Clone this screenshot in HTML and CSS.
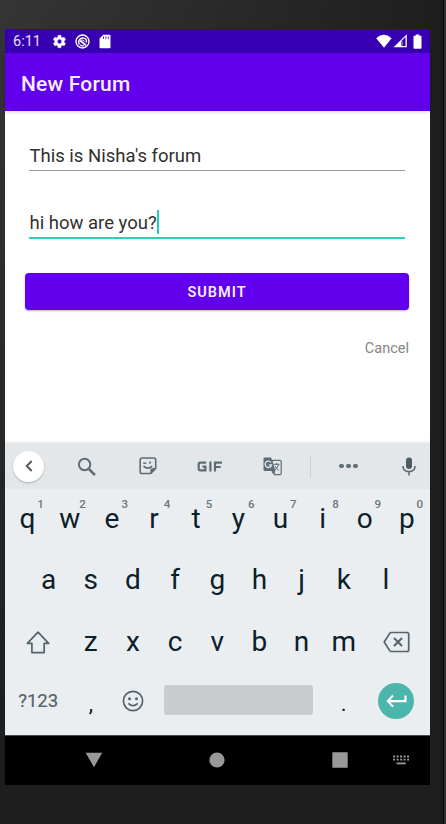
FILE: index.html
```html
<!DOCTYPE html>
<html lang="en">
<head>
<meta charset="utf-8">
<title>New Forum</title>
<link rel="stylesheet" href="styles.css">
</head>
<body>
<div class="frame">
<main class="screen">
  <div class="status">
    <span class="time">6:11</span>
    <svg class="gear" width="15" height="15" viewBox="0 0 24 24" fill="#fff"><path d="M19.400 13c.1-.3.1-.6.1-1s0-.7-.1-1l2.100-1.600c.2-.2.3-.5.100-.7l-2-3.400c-.1-.2-.4-.3-.6-.2l-2.500 1c-.5-.4-1.100-.7-1.700-1l-.4-2.600c0-.3-.2-.5-.5-.5h-4c-.3 0-.5.2-.5.5L9 5.100c-.6.300-1.200.600-1.700 1l-2.500-1c-.2-.1-.5 0-.6.2l-2 3.400c-.1.2-.1.500.1.700L4.500 11c0 .3-.1.600-.1 1s0 .7.100 1l-2.200 1.600c-.2.2-.2.500-.1.700l2 3.400c.1.2.4.300.6.200l2.500-1c.5.400 1.100.700 1.700 1l.4 2.600c0 .3.200.5.500.5h4c.3 0 .5-.2.500-.5l.4-2.600c.6-.3 1.200-.6 1.700-1l2.500 1c.2.100.5 0 .6-.2l2-3.400c.1-.2.1-.5-.1-.7zM12 15.500a3.500 3.500 0 1 1 0-7 3.500 3.500 0 0 1 0 7z" stroke="#fff" stroke-width=".5"/></svg>
    <svg class="sync" width="15" height="15" viewBox="0 0 15 15" fill="none" stroke="#fff"><circle cx="7.500" cy="7.500" r="6.500" stroke-width="1.400"/><path d="M4.300 10.500A4.200 4.200 0 1 1 11.400 6v2.500" stroke-width="1.400"/><path d="M5.200 6.800 11 11.300" stroke-width="1.800"/><path d="M5.500 6.500c1.500-1 3.500-.5 4 1.200" stroke-width="1"/><path d="M5 10.800c1.200 1 3 1.200 4 .6" stroke-width="1.200"/></svg>
    <svg class="sd" width="12" height="15" viewBox="0 0 12 15"><path d="M4.300.8h6.200q1 0 1 1v11.400q0 1-1 1h-9q-1 0-1-1V4.600z" fill="#fff"/><path d="M4.500 2.500v2.300M6.900 2.500v2.300M9.300 2.500v2.300" stroke="#3700b3" stroke-width=".9"/></svg>
    <span class="grow"></span>
    <svg width="16" height="14" viewBox="0 0 16 14"><path d="M.2 4.200Q7.800-2.600 15.600 4.200L8 13.700z" fill="#fff"/></svg>
    <svg class="cell" width="15" height="14" viewBox="0 0 15 14"><path d="M.5 13.300 13.800.3v13z" fill="#fff"/><path d="M8.300 7.300v4.800h4.200v-9z" fill="#3700b3"/><path d="M9.100 7.200v4.700" stroke="#fff" stroke-width=".6"/></svg>
    <svg class="battery" width="9" height="15" viewBox="0 0 9 15"><path d="M2.700.4h3.600v1.400h1.400q.8 0 .8.800V14q0 .700-.8.700H1.300q-.8 0-.8-.7V2.600q0-.8.8-.8h1.400z" fill="#fff"/></svg>
  </div>
  <header class="appbar"><h1>New Forum</h1></header>
  <section class="form">
    <div class="field">This is Nisha's forum</div>
    <div class="field active">hi how are you?<span class="caret"></span></div>
    <div class="submit">SUBMIT</div>
    <div class="cancel">Cancel</div>
  </section>
  <section class="keyboard">
    <div class="tools">
      <span class="back"><svg width="10" height="14" viewBox="0 0 10 14" fill="none" stroke="#555b5f" stroke-width="2"><path d="M7.700 2 2.800 7l4.900 5"/></svg></span>
      <svg class="t-search" width="20" height="20" viewBox="0 0 20 20" fill="none" stroke="#5f6d74"><circle cx="7.600" cy="7.500" r="5.700" stroke-width="2"/><path d="m11.900 12 6 6" stroke-width="2.500"/></svg>
      <svg class="t-sticker" width="18" height="18" viewBox="0 0 18 18" fill="none" stroke="#5f6d74" stroke-width="1.600"><path d="M3 1h12q1.700 0 1.700 1.700V11.500l-5 5H3q-1.800 0-1.800-1.800v-12Q1.200 1 3 1z"/><path d="M16.500 11.500h-3.200q-1.500 0-1.500 1.500v3.500z" fill="#5f6d74" stroke-width=".8"/><path d="M4.500 9.200q4.400 4 8.700 0"/><path d="M4.300 6.200h3M11 4.500v2.300"/></svg>
      <span class="t-gif"><svg width="26" height="11" viewBox="0 0 26 11" fill="none" stroke="#5f6d74" stroke-width="2.200"><path d="M9.200 1.600H3q-1.300 0-1.300 1.300v5.200q0 1.300 1.300 1.300h5.400V5.600H5.500M13.400.5v10M18 10.500V1.600h7M18 6h5.700"/></svg></span>
      <svg class="t-translate" width="19" height="19" viewBox="0 0 19 19"><path d="M9 3.300h8q1.200 0 1.200 1.200v12q0 1.200-1.200 1.200h-5.500z" fill="none" stroke="#5f6d74" stroke-width="1.200"/><path d="M1.700.6h6.500l4.300 13.300H1.700Q.5 13.900.5 12.700V1.800Q.5.600 1.700.6zM8.500 14h4l-2.300 3.500z" fill="#5f6d74"/><path d="M8 5.500a3.200 3.200 0 1 0 .5 2.300H5.800" fill="none" stroke="#e3e7e9" stroke-width="1.300"/><path d="M10.500 7.300h6M13.700 6v1.500M15.600 7.500q-.8 3.500-4 5.500M12 9q1.500 3 4 4.500" fill="none" stroke="#5f6d74"/></svg>
      <span class="divider"></span>
      <span class="dots"><i></i><i></i><i></i></span>
      <svg class="t-mic" width="14" height="19" viewBox="0 0 14 19"><rect x="4" y=".6" width="6" height="11.500" rx="3" fill="#4d5b62"/><path d="M.9 9q.3 5.600 6.100 5.600T13.100 9M7 14.500v4" fill="none" stroke="#5f6d74" stroke-width="1.600"/></svg>
    </div>
    <div class="row ten">
      <span class="key">q<sup>1</sup></span><span class="key">w<sup>2</sup></span><span class="key">e<sup>3</sup></span><span class="key">r<sup>4</sup></span><span class="key">t<sup>5</sup></span><span class="key">y<sup>6</sup></span><span class="key">u<sup>7</sup></span><span class="key">i<sup>8</sup></span><span class="key">o<sup>9</sup></span><span class="key">p<sup>0</sup></span>
    </div>
    <div class="row nine">
      <span class="key">a</span><span class="key">s</span><span class="key">d</span><span class="key">f</span><span class="key">g</span><span class="key">h</span><span class="key">j</span><span class="key">k</span><span class="key">l</span>
    </div>
    <div class="row third">
      <span class="key"><svg width="24" height="23" viewBox="0 0 24 23" fill="none" stroke="#55636a" stroke-width="1.700" stroke-linejoin="round"><path d="M12 1.200 22.700 12.300h-4.500v9.300H5.900v-9.300H1.300z"/></svg></span>
      <span class="key">z</span><span class="key">x</span><span class="key">c</span><span class="key">v</span><span class="key">b</span><span class="key">n</span><span class="key">m</span>
      <span class="key"><svg width="27" height="22" viewBox="0 0 27 22" fill="none" stroke="#55636a" stroke-width="1.700" stroke-linejoin="round"><path d="M8.300 1.500h15.600q1.800 0 1.800 1.800v15.400q0 1.800-1.800 1.800H8.300q-1 0-1.600-.9L1.200 11l5.500-8.600q.6-.9 1.600-.9z"/><path d="m11 7 8 8m0-8-8 8" stroke-width="2"/></svg></span>
    </div>
    <div class="row fourth">
      <span class="key mode">?123</span>
      <span class="key punct">,</span>
      <span class="key"><svg width="22" height="22" viewBox="0 0 22 22" fill="none" stroke="#55636a" stroke-width="1.700"><circle cx="11" cy="11" r="9.600"/><path d="M6.300 13.300q4.700 4.500 9.400 0"/><g fill="#55636a" stroke="none"><circle cx="7.500" cy="8.700" r="1.500"/><circle cx="14.500" cy="8.700" r="1.500"/></g></svg></span>
      <span class="space"></span>
      <span class="key punct">.</span>
      <span class="key"><span class="enter"><svg width="21" height="14" viewBox="0 0 21 14" fill="none" stroke="#fff" stroke-width="2.100"><path d="M19.500 1.500v5.600H2M7 1.500 1.800 7.100 7 12.600"/></svg></span></span>
    </div>
  </section>
  <nav class="nav">
    <svg width="18" height="16" viewBox="0 0 18 16"><path d="M.6.700h16.600L9 15.200z" fill="#999"/></svg>
    <svg class="home" width="16" height="16" viewBox="0 0 16 16"><circle cx="8" cy="8" r="7.600" fill="#999"/></svg>
    <svg class="recent" width="16" height="16" viewBox="0 0 16 16"><rect x=".3" y=".3" width="15.400" height="15.400" rx=".6" fill="#999"/></svg>
    <svg class="ime" width="17" height="10" viewBox="0 0 17 10" stroke="#999"><path d="M.1 1.500h16.800M.1 4.700h16.800" stroke-width="1.800" stroke-dasharray="2 1.500"/><path d="M3.500 8.400h9.300" stroke-width="1.800"/></svg>
  </nav>
</main>
</div>
</body>
</html>
```
FILE: styles.css
```css
* { box-sizing: border-box; }
body { margin: 0; font-family: Roboto, "Liberation Sans", sans-serif; }
svg { display: block; flex: none; }
.frame {
  width: 446px;
  height: 824px;
  padding: 29px 16px 39px 5px;
  overflow: hidden;
  background:
    linear-gradient(90deg, transparent 443px, #050505 443px, #050505 444px, #343432 444px),
    linear-gradient(180deg, transparent 0, #1e1e1e 90%),
    linear-gradient(90deg, #353536, #1e1e1e);
}
.screen { width: 425px; height: 756px; background: #fff; display: flex; flex-direction: column; }
.status { height: 24px; background: #3700b3; display: flex; align-items: center; padding: 0 8px; }
.time { width: 39px; color: #e9e2f8; font-size: 14.5px; line-height: 24px; padding-top: 1px; }
.sync { margin-left: 8px; }
.sd { margin-left: 9px; }
.grow { flex: 1; }
.cell { margin-left: 1px; }
.battery { margin-left: 5px; }
.appbar {
  height: 58px;
  background: #6200ee;
  padding: 3px 16px 0;
  display: flex;
  align-items: center;
  box-shadow: 0 1px 4px rgba(0, 0, 0, .16);
}
h1 { margin: 0; font-size: 21px; font-weight: 500; letter-spacing: .2px; color: #f4efff; }
.form { height: 332px; padding: 29px 21px 0 20px; }
.field {
  height: 31px;
  margin: 0 4px 36px;
  border-bottom: 1.5px solid #9b9b9b;
  display: flex;
  align-items: center;
  padding: 1px 0 0 .5px;
  font-size: 18.500px;
  color: #303030;
}
.field.active { height: 32px; border-bottom: 2px solid #2ccfbd; margin-bottom: 34px; }
.caret { width: 2px; height: 24px; background: #22cdbb; margin-top: -2px; }
.submit {
  height: 37px;
  background: #6200ee;
  border-radius: 4px;
  box-shadow: 0 1px 2px rgba(0, 0, 0, .3);
  color: #f4efff;
  font-size: 14.5px;
  font-weight: 600;
  letter-spacing: 1px;
  line-height: 39px;
  text-align: center;
}
.cancel { margin-top: 30px; color: #858585; font-size: 14.5px; line-height: 18px; text-align: right; }
.keyboard {
  height: 293px;
  background: #ebeef1;
  border-bottom: 1px solid #454c50;
  box-shadow: 0 -1px 3px rgba(0, 0, 0, .1);
}
.tools { height: 46px; background: #e3e7e9; display: flex; align-items: center; padding-left: 8px; }
.back {
  width: 31px;
  height: 31px;
  border-radius: 50%;
  background: #fff;
  box-shadow: 0 1px 2px rgba(0, 0, 0, .25);
  display: flex;
  align-items: center;
  justify-content: center;
}
.t-search { margin-left: 33px; margin-top: 1px; }
.t-sticker { margin-left: 42px; }
.t-gif { margin-left: 40px; }
.t-translate { margin-left: 40px; margin-top: 1px; }
.divider { width: 1px; height: 23px; background: #cdd2d5; margin-left: 28px; }
.dots { display: flex; gap: 2.500px; margin-left: 28px; }
.dots i { width: 4.500px; height: 4.500px; border-radius: 50%; background: #5f6d74; }
.t-mic { margin-left: 44px; }
.row { display: grid; height: 61.250px; padding: 0 2px 0 1.500px; }
.ten { grid-template-columns: repeat(10, 1fr); }
.nine { grid-template-columns: repeat(9, 1fr); padding: 0 23px 0 22.500px; }
.third { grid-template-columns: 1.500fr repeat(7, 1fr) 1.500fr; }
.fourth { grid-template-columns: 1.500fr 1fr 1fr 4fr 1fr 1.500fr; }
.key {
  min-width: 0;
  display: flex;
  align-items: center;
  justify-content: center;
  position: relative;
  padding-bottom: 1px;
  font-size: 28px;
  line-height: 34px;
  color: #0b2029;
}
.key sup { position: absolute; top: 9px; left: 28px; width: 12px; text-align: center; font-size: 11.5px; font-weight: 500; line-height: 13px; color: #69777e; }
.third .key svg { margin-top: 1px; }
.fourth .key { padding-bottom: 4px; }
.fourth .mode { font-size: 18.500px; color: #55636a; padding-bottom: 5px; -webkit-text-stroke: .2px #55636a; }
.fourth .punct { font-size: 22px; padding: 1px 0 0; }
.space { height: 30px; margin: 12.500px 10px 0 10px; border-radius: 3px; background: #c9cdd0; }
.enter {
  width: 36px;
  height: 36px;
  border-radius: 50%;
  background: #4db6ac;
  display: flex;
  align-items: center;
  justify-content: center;
}
.nav { height: 49px; background: #000; display: flex; align-items: center; padding: 0 0 2px 80px; }
.home { margin-left: 106px; }
.recent { margin-left: 106.500px; }
.ime { margin-left: 45px; }
```
